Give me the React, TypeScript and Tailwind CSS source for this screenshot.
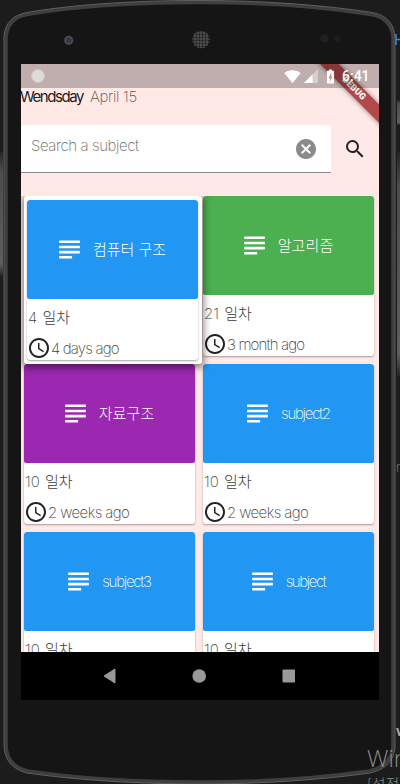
import React from "react";
import {
  MdSubject,
  MdSchedule,
  MdSearch,
  MdCancel,
  MdSignalWifi4Bar,
  MdBatteryChargingFull,
} from "react-icons/md";

type Subject = { name: string; days: string; ago: string; color: string; spacing: string; agoSpacing: string };

const subjects: Subject[] = [
  { name: "컴퓨터 구조", days: "4", ago: "4 days ago", color: "bg-[#2196f3]", spacing: "tracking-[0px]", agoSpacing: "tracking-[-0.8px]" },
  { name: "알고리즘", days: "21", ago: "3 month ago", color: "bg-[#4caf50]", spacing: "tracking-[0.1px]", agoSpacing: "tracking-[-0.85px]" },
  { name: "자료구조", days: "10", ago: "2 weeks ago", color: "bg-[#9c27b0]", spacing: "tracking-[0.1px]", agoSpacing: "tracking-[-0.6px]" },
  { name: "subject2", days: "10", ago: "2 weeks ago", color: "bg-[#2196f3]", spacing: "tracking-[-1.25px]", agoSpacing: "tracking-[-0.6px]" },
  { name: "subject3", days: "10", ago: "2 weeks ago", color: "bg-[#2196f3]", spacing: "tracking-[-1.25px]", agoSpacing: "tracking-[-0.6px]" },
  { name: "subject", days: "10", ago: "2 weeks ago", color: "bg-[#2196f3]", spacing: "tracking-[-1.4px]", agoSpacing: "tracking-[-0.6px]" },
];

function PhoneFrame() {
  return (
    <svg className="absolute inset-0" width="400" height="784" viewBox="0 0 400 784">
      <defs>
        <linearGradient id="side" x1="0" x2="0" y1="0" y2="1">
          <stop offset="0" stopColor="#242424" />
          <stop offset="0.15" stopColor="#4c4c4c" />
          <stop offset="0.9" stopColor="#5e5e5e" />
          <stop offset="1" stopColor="#252525" />
        </linearGradient>
        <pattern id="mesh" width="3" height="3" patternUnits="userSpaceOnUse">
          <rect width="3" height="3" fill="#4b4b4b" />
          <circle cx="1.5" cy="1.5" r="0.9" fill="#151515" />
        </pattern>
        <radialGradient id="lens">
          <stop offset="0" stopColor="#393a78" />
          <stop offset="0.4" stopColor="#30303c" />
          <stop offset="0.7" stopColor="#555" />
          <stop offset="1" stopColor="#222" />
        </radialGradient>
      </defs>
      <rect width="400" height="784" fill="#1c1c1c" />
      <rect x="0" y="152" width="3" height="124" fill="url(#side)" />
      <rect x="397" y="100" width="3" height="25" fill="url(#side)" />
      <rect x="397" y="152" width="3" height="224" fill="url(#side)" />
      <path d="M395.5 39.5H400M396 34V45" stroke="#3b8ad8" strokeWidth="1.5" />
      <path
        d="M6 744V37C7 25 14 17 27 14.500C70 7 130 2.500 200 2.500S330 8 371 14.500C385 17 392 25 393 37V746C392 760 383 768 369 771C320 778 260 782 200 782S75 778 28 771C14 768 6 759 6 744Z"
        fill="#151515"
        stroke="#3f3f3f"
        strokeWidth="3.500"
      />
      <path
        d="M4 744V36C5 23 13 15 27 12.500C70 5 130 .5 200 .5S330 6 372 12.500C387 15 394 24 395 37V747C394 762 384 770 370 773C320 780 260 784 200 784S75 780 27 773C12 769 4 760 4 744Z"
        fill="none"
        stroke="#686868"
        strokeWidth="0.9"
      />
      <circle cx="68.7" cy="40.3" r="5" fill="url(#lens)" />
      <circle cx="201" cy="39.5" r="8.7" fill="url(#mesh)" />
      <circle cx="324.5" cy="38.5" r="4" fill="#202020" />
      <circle cx="337.5" cy="38.5" r="3" fill="#1e1e1e" />
    </svg>
  );
}

function SubjectCard({ s }: { s: Subject }) {
  return (
    <article className="flex h-[160px] w-[171px] flex-col overflow-hidden rounded-[3px] bg-white text-[#3c3c3c] shadow-[0_1px_2px_rgba(0,0,0,0.35)]">
      <div className={`flex h-[99px] shrink-0 items-center justify-center gap-[8px] rounded-[2px] pr-[5px] text-white ${s.color}`}>
        <MdSubject size={31} />
        <span className={`whitespace-nowrap text-[15px] leading-5 ${s.spacing}`}>{s.name}</span>
      </div>
      <div className="flex h-[37px] shrink-0 items-center pl-px text-[15px] leading-5">
        <span className="whitespace-pre [word-spacing:1px]">{s.days} 일차</span>
      </div>
      <div className="flex h-[24px] shrink-0 items-center text-[15px] leading-5">
        <MdSchedule size={24} className="shrink-0 text-[#222]" />
        <span className={`mt-px whitespace-nowrap ${s.agoSpacing}`}>{s.ago}</span>
      </div>
    </article>
  );
}

function StatusBar() {
  return (
    <div className="relative z-20 flex h-[24px] shrink-0 items-center bg-black/25 pl-[10px] text-white">
      <span className="h-[14px] w-[14px] rounded-full border border-[#d0c8c6] bg-[#dedbd9]" />
      <MdSignalWifi4Bar size={17} className="ml-[239px]" />
      <svg width="14" height="14" viewBox="0 0 14 14" className="ml-[3px]">
        <path d="M14 0V14H0Z" fill="#d8cecc" />
        <path d="M8.5 5.5V14H0Z" fill="#fff" />
      </svg>
      <MdBatteryChargingFull size={17} className="ml-[4px]" />
      <span className="ml-[3px] font-[Roboto] text-[14px] font-medium leading-6">6:41</span>
    </div>
  );
}

export default function App() {
  return (
    <div className="relative h-[784px] w-[400px] overflow-hidden bg-[#1c1c1c] pl-[21px] pt-[64px] font-['Inter','Noto_Sans_CJK_KR',sans-serif] font-extralight">
      <PhoneFrame />
      <main className="relative flex h-[636px] w-[358px] flex-col overflow-hidden bg-[#ffe9e7]">
        <div className="absolute left-[283px] top-[18px] z-10 flex h-[12.5px] w-[100px] rotate-45 items-center justify-center bg-[#b24847] font-[Roboto] text-[9px] font-black leading-none text-white shadow-[0_0_5px_rgba(0,0,0,0.5)]">
          DEBUG
        </div>
        <StatusBar />
        <header className="flex h-[18px] shrink-0 items-center gap-[6px] whitespace-nowrap text-[15px] leading-[18px]">
          <span className="-ml-px font-normal tracking-[-1.45px] text-[#222]">Wendsday</span>
          <span className="ml-px tracking-[-0.3px] text-[#555]">April 15</span>
        </header>
        <div className="mt-[19px] flex h-[48px] shrink-0 items-center">
          <div className="flex h-[48px] w-[310px] items-center justify-between rounded-t-[3px] border-b border-[#888] bg-white pl-[10px] pr-[13px]">
            <span className="-mt-[5px] text-[15px] leading-5 tracking-[-0.4px] text-[#666]">Search a subject</span>
            <MdCancel size={24} className="text-[#8a8a8a]" />
          </div>
          <MdSearch size={24} className="ml-[12px] text-[#222]" />
        </div>
        <section className="mt-[23px] grid h-[456px] shrink-0 grid-cols-[179px_171px] auto-rows-[168px] overflow-hidden pl-[3px]">
          {subjects.map((s, i) =>
            i === 0 ? (
              <div key={s.name} className="relative z-10 h-[168px] w-[178px] rounded-[3px] bg-white px-[3px] py-[4px] shadow-[0_2px_7px_2px_rgba(0,0,0,0.45)]">
                <SubjectCard s={s} />
              </div>
            ) : (
              <SubjectCard key={s.name} s={s} />
            ),
          )}
        </section>
        <nav className="relative flex h-[48px] w-full shrink-0 bg-black">
          <svg width="358" height="48" viewBox="0 0 358 48" fill="#999">
            <path d="M83 24L94 17V31Z" stroke="#999" />
            <circle cx="178.2" cy="24" r="6.8" />
            <rect x="261.5" y="17.5" width="12.5" height="13" rx="1" />
          </svg>
        </nav>
      </main>
      <div className="absolute left-[367px] top-[743px] whitespace-nowrap font-['Noto_Sans_CJK_KR',sans-serif] text-[#8b8b8b]">
        <div className="font-[Open_Sans] text-[24px] font-light leading-[30px]">Win</div>
        <div className="text-[15px] font-light leading-[22px]">[설정</div>
      </div>
      <span className="absolute left-[396px] top-[459px] font-[Roboto] text-[14px] leading-4 text-[#999]">n</span>
      <span className="absolute left-[396px] top-[723px] font-[Roboto] text-[14px] font-bold leading-4 text-[#aaa]">v</span>
    </div>
  );
}
